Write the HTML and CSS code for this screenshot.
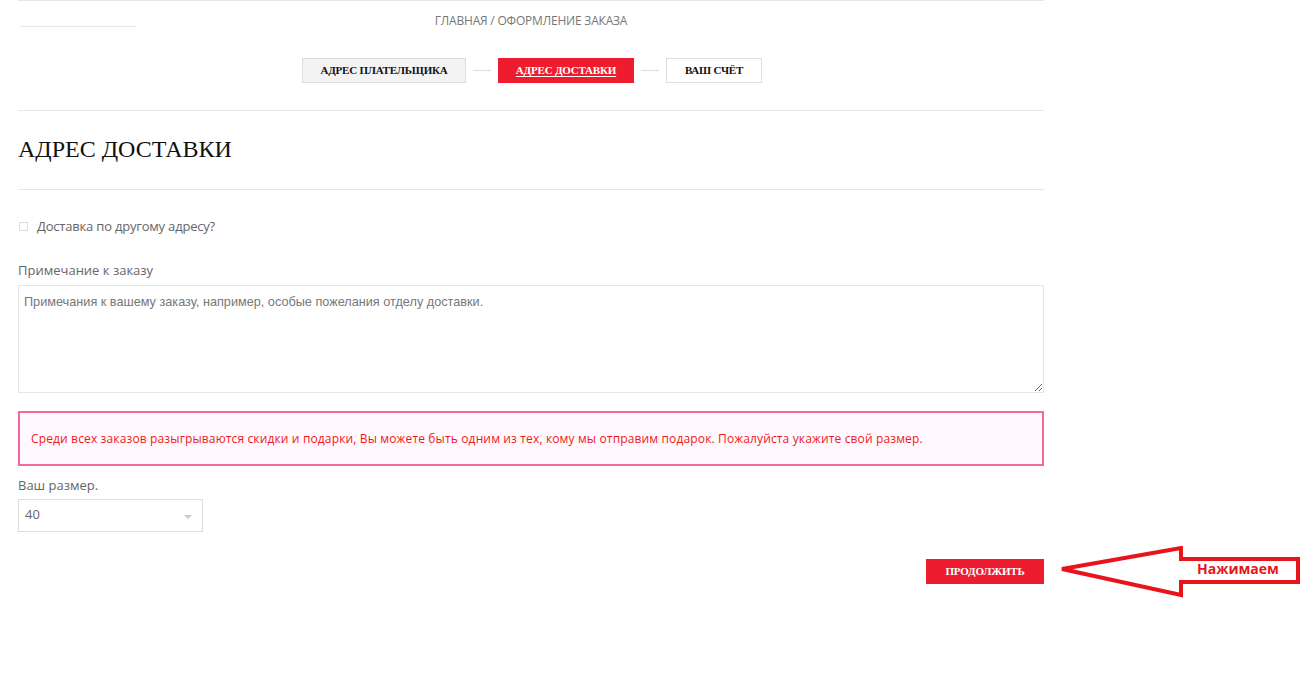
FILE: index.html
```html
<!DOCTYPE html>
<html lang="ru">
<head>
<meta charset="utf-8">
<title>Оформление заказа</title>
<link rel="stylesheet" href="styles.css">
</head>
<body>
<div class="page">
  <div class="crumbs-row">
    <div class="crumbs-left"><span class="logo-line"></span></div>
    <div class="crumbs">ГЛАВНАЯ / ОФОРМЛЕНИЕ ЗАКАЗА</div>
    <div></div>
  </div>
  <div class="steps">
    <span class="step step-done">АДРЕС ПЛАТЕЛЬЩИКА</span>
    <span class="step-line"></span>
    <span class="step step-active"><u>АДРЕС ДОСТАВКИ</u></span>
    <span class="step-line"></span>
    <span class="step">ВАШ СЧЁТ</span>
  </div>
  <div class="title-block">
    <h1 class="title">АДРЕС ДОСТАВКИ</h1>
  </div>
  <div class="form">
    <label class="check-row"><span class="checkbox"></span>Доставка по другому адресу?</label>
    <div class="field-label">Примечание к заказу</div>
    <textarea class="notes" placeholder="Примечания к вашему заказу, например, особые пожелания отделу доставки."></textarea>
    <div class="promo">Среди всех заказов разыгрываются скидки и подарки, Вы можете быть одним из тех, кому мы отправим подарок. Пожалуйста укажите свой размер.</div>
    <div class="field-label size-label">Ваш размер.</div>
    <div class="select"><span>40</span><span class="select-arrow"></span></div>
    <div class="actions">
      <span class="btn-continue">ПРОДОЛЖИТЬ</span>
    </div>
  </div>
</div>
<div class="callout">
  <svg width="252" height="56" viewBox="0 0 252 56">
    <polygon points="3,23 122,2 122,13 239,13 239,36 122,36 122,49" fill="#ffffff" stroke="#e8141c" stroke-width="4" stroke-linejoin="miter"/>
  </svg>
  <span class="callout-text">Нажимаем</span>
</div>
</body>
</html>
```

FILE: styles.css
```css
html, body {
  margin: 0;
  padding: 0;
  background: #ffffff;
}
body {
  font-family: "Open Sans", "Liberation Sans", sans-serif;
  color: #666666;
}
.page {
  margin-left: 18px;
  width: 1026px;
  border-top: 1px solid #e6e6e6;
}
.crumbs-row {
  display: grid;
  grid-template-columns: 1fr auto 1fr;
  margin-top: 11px;
  height: 18px;
}
.crumbs-left {
  position: relative;
}
.logo-line {
  display: block;
  margin-left: 2px;
  margin-top: 14px;
  width: 117px;
  border-top: 1px solid #e8e8e8;
}
.crumbs {
  font-size: 12px;
  line-height: 18px;
  color: #777777;
  letter-spacing: -0.2px;
  text-align: center;
}
.steps {
  display: flex;
  justify-content: center;
  align-items: center;
  margin-top: 28px;
  padding-bottom: 27px;
  padding-left: 2px;
  border-bottom: 1px solid #e6e6e6;
}
.step {
  box-sizing: border-box;
  height: 25px;
  line-height: 23px;
  border: 1px solid #dddddd;
  background: #ffffff;
  color: #111111;
  font-family: "Liberation Serif", "Times New Roman", serif;
  font-weight: bold;
  font-size: 11px;
  letter-spacing: -0.2px;
  text-align: center;
}
.step-done {
  width: 164px;
  background: #f3f3f3;
}
.step-active {
  width: 136px;
  background: #ed1c2e;
  border-color: #ed1c2e;
  color: #ffffff;
}
.step-active u {
  text-decoration-thickness: 1px;
  text-underline-offset: 2px;
}
.step:last-child {
  width: 96px;
}
.step-line {
  width: 18px;
  margin: 0 7px;
  border-top: 1px solid #dddddd;
}
.title-block {
  padding-top: 23px;
  padding-bottom: 25px;
  border-bottom: 1px solid #e6e6e6;
}
.title {
  margin: 0;
  font-family: "Liberation Serif", "Times New Roman", serif;
  font-weight: normal;
  font-size: 24px;
  line-height: 30px;
  color: #111111;
}
.form {
  display: flex;
  flex-direction: column;
  padding-top: 26px;
}
.check-row {
  display: flex;
  align-items: center;
  font-size: 13px;
  line-height: 20px;
  letter-spacing: -0.2px;
  color: #666666;
}
.checkbox {
  box-sizing: border-box;
  width: 9px;
  height: 9px;
  border: 1px solid #dddddd;
  margin-left: 1px;
  margin-right: 9px;
}
.field-label {
  margin-top: 24px;
  font-size: 13px;
  line-height: 20px;
  color: #666666;
}
.notes {
  box-sizing: border-box;
  margin-top: 5px;
  width: 1026px;
  height: 108px;
  border: 1px solid #e6e6e6;
  padding: 8px 5px;
  font-family: "Liberation Sans", Arial, sans-serif;
  font-size: 12.7px;
  line-height: 16px;
  color: #666666;
  resize: vertical;
  outline: none;
}
.notes::placeholder {
  color: #777777;
  opacity: 1;
}
.promo {
  box-sizing: border-box;
  margin-top: 18px;
  height: 55px;
  border: 2px solid #f06b98;
  background: #fff8fe;
  padding: 0 11px;
  display: flex;
  align-items: center;
  font-size: 12px;
  color: #ee1a1a;
  letter-spacing: 0.14px;
}
.size-label {
  margin-top: 9px;
}
.select {
  box-sizing: border-box;
  margin-top: 4px;
  width: 185px;
  height: 33px;
  border: 1px solid #dddddd;
  display: flex;
  align-items: center;
  justify-content: space-between;
  padding: 0 10px 3px 6px;
  font-size: 13px;
  color: #666666;
}
.select-arrow {
  width: 0;
  height: 0;
  border-left: 4px solid transparent;
  border-right: 4px solid transparent;
  border-top: 4px solid #cccccc;
  margin-top: 5px;
}
.actions {
  display: flex;
  justify-content: flex-end;
  margin-top: 27px;
}
.btn-continue {
  width: 118px;
  height: 25px;
  line-height: 25px;
  text-align: center;
  background: #ed1c2e;
  color: #ffffff;
  font-family: "Liberation Serif", "Times New Roman", serif;
  font-weight: bold;
  font-size: 11px;
  letter-spacing: -0.2px;
}
.callout {
  position: absolute;
  left: 1059px;
  top: 546px;
  width: 252px;
  height: 56px;
}
.callout svg {
  display: block;
}
.callout-text {
  position: absolute;
  left: 138px;
  top: 13px;
  font-family: "Open Sans", "Liberation Sans", sans-serif;
  font-weight: bold;
  font-size: 14px;
  line-height: 20px;
  color: #e8141c;
}
```
